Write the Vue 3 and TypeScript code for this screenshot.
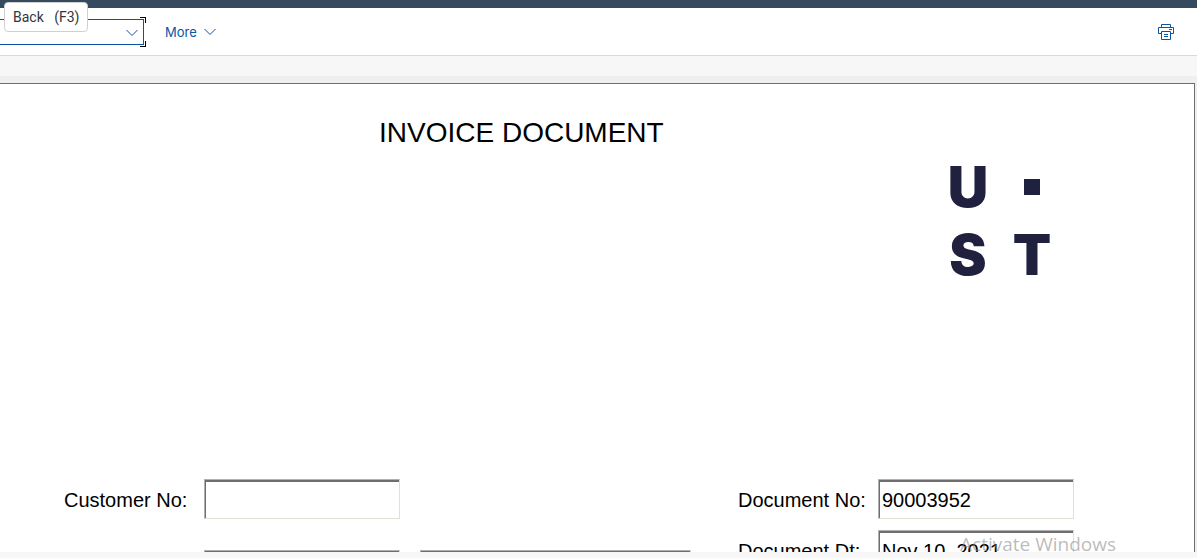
<script setup lang="ts">
import { ref } from 'vue'

const command = ref('')
const customerNo = ref('')
const customerCode = ref('')
const customerName = ref('')
const documentNo = ref('90003952')
const documentDate = ref('Nov 10, 2021')
const backHint = 'Back   (F3)'
</script>

<template>
  <div class="app">
    <div class="shell"></div>
    <header class="toolbar">
      <div class="command">
        <select v-model="command" aria-label="Command">
          <option value=""></option>
        </select>
        <svg class="chevron" viewBox="0 0 12 8"><path d="M0.5 1L6 6.5L11.5 1" /></svg>
        <i class="corner top"></i>
        <i class="corner bottom"></i>
      </div>
      <button class="more" type="button">
        More
        <svg class="chevron" viewBox="0 0 12 8"><path d="M0.5 1L6 6.5L11.5 1" /></svg>
      </button>
      <button class="print" type="button" aria-label="Print">
        <svg viewBox="0 0 16 16">
          <path d="M3.5 3.5V0.5H12.5V3.5M3 9.5H0.5V3.5H15.5V9.5H13M3.5 7.5H12.5V15.5H3.5ZM11 5.5H14M6 10.5H10M6 12.5H10" />
        </svg>
      </button>
      <div class="tooltip" role="tooltip">{{ backHint }}</div>
    </header>
    <div class="band"></div>
    <main class="paper">
      <div class="heading">
        <h1>INVOICE DOCUMENT</h1>
        <div class="logo" role="img" aria-label="UST">
          <span>U</span><i class="dot"></i><span>S</span><span>T</span>
        </div>
      </div>
      <form class="fields" @submit.prevent>
        <div class="group customer">
          <label for="customer">Customer No:</label>
          <input id="customer" v-model="customerNo" type="text" />
          <input v-model="customerCode" class="code" type="text" aria-label="Customer code" />
          <input v-model="customerName" class="name" type="text" aria-label="Customer name" />
        </div>
        <div class="group document">
          <label for="docno">Document No:</label>
          <input id="docno" v-model="documentNo" type="text" />
          <label for="docdt">Document Dt:</label>
          <input id="docdt" v-model="documentDate" type="text" />
        </div>
      </form>
    </main>
    <footer class="foot"></footer>
    <div class="watermark">Activate Windows</div>
  </div>
</template>

<style>
body {
  margin: 0;
}
</style>

<style scoped>
.app {
  position: relative;
  display: flex;
  flex-direction: column;
  height: 100vh;
  overflow: hidden;
  background: #efefef;
  color: #000;
  font-family: "Liberation Sans", Arial, sans-serif;
}
.app *,
.app *::before {
  box-sizing: border-box;
}
.shell {
  flex: none;
  height: 8px;
  background: #354a5f;
}
.toolbar {
  position: relative;
  flex: none;
  display: flex;
  align-items: center;
  height: 48px;
  padding-right: 23px;
  background: #fff;
  border-bottom: 1px solid #d9d9d9;
}
.command {
  position: relative;
  width: 144px;
  height: 26px;
}
.command select {
  display: block;
  width: 100%;
  height: 100%;
  border: 1px solid #0a55a2;
  border-left: 0;
  border-radius: 0;
  background: #fff;
  appearance: none;
  outline: none;
}
.chevron {
  width: 12px;
  height: 8px;
  fill: none;
  stroke: #0a55a2;
}
.command .chevron {
  position: absolute;
  right: 6px;
  top: 10px;
  pointer-events: none;
}
.corner {
  position: absolute;
  right: -2px;
  width: 6px;
  height: 6px;
  border-right: 1px solid #000;
}
.corner.top {
  top: -2px;
  border-top: 1px solid #000;
}
.corner.bottom {
  bottom: -2px;
  border-bottom: 1px solid #000;
}
.more,
.print {
  border: 0;
  padding: 0;
  background: none;
}
.more {
  display: flex;
  align-items: center;
  gap: 7px;
  margin-left: 21px;
  padding-top: 1px;
  color: #0a55a2;
  font: 13px Inter, sans-serif;
}
.print {
  margin-left: auto;
}
.print svg {
  display: block;
  width: 16px;
  height: 16px;
  fill: none;
  stroke: #0a55a2;
}
.tooltip {
  position: absolute;
  left: 4px;
  top: -6px;
  height: 30px;
  padding: 0 8px;
  border: 1px solid #d0d0d0;
  border-radius: 4px;
  background: #fff;
  color: #32363a;
  font: 14px/28px Roboto, sans-serif;
  white-space: pre;
}
.band {
  flex: none;
  height: 20px;
  margin-bottom: 7px;
  background: #f7f7f7;
}
.paper {
  flex: 1;
  min-height: 0;
  overflow: hidden;
  margin-right: 2px;
  border-top: 1px solid #6e6e6e;
  border-right: 1px solid #6e6e6e;
  background: #fff;
}
.heading {
  display: flex;
  justify-content: space-between;
  height: 395px;
  padding: 33px 140px 0 379px;
}
h1 {
  margin: 0;
  font-size: 28px;
  line-height: 32px;
  font-weight: 400;
}
.logo {
  display: grid;
  grid-template-columns: 44px 44px;
  grid-auto-rows: 68px;
  column-gap: 20px;
  align-self: flex-start;
  justify-items: center;
  align-items: center;
  margin-top: 36px;
  color: #20203f;
  font: 900 56px/68px Inter, sans-serif;
}
.dot {
  width: 16px;
  height: 16px;
  background: #20203f;
}
.fields {
  display: flex;
  justify-content: space-between;
  padding: 0 120px 0 64px;
  font-size: 20px;
}
.group {
  display: grid;
  align-items: center;
}
.group.customer {
  grid-template-columns: 140px 196px 271px;
  grid-template-rows: 40px 40px;
  row-gap: 31px;
}
.group.document {
  grid-template-columns: 140px 196px;
  grid-template-rows: 40px 40px;
  row-gap: 11px;
}
.code {
  grid-column: 2;
}
.name {
  margin-left: 20px;
}
label {
  padding-top: 2px;
}
input {
  width: 100%;
  height: 40px;
  padding: 2px 3px 0;
  border: 1px solid;
  border-color: #b0b0b0 #e0dfd8 #e0dfd8 #b0b0b0;
  border-radius: 0;
  background: #fff;
  box-shadow: inset 1px 2px 0 #6e6e6e;
  font: inherit;
  outline: none;
}
.foot {
  flex: none;
  height: 6px;
  background: #f7f7f7;
}
.watermark {
  position: absolute;
  right: 81px;
  bottom: 0;
  color: rgba(130, 130, 130, 0.55);
  font: 19px/28px "Open Sans", sans-serif;
  pointer-events: none;
}
</style>
